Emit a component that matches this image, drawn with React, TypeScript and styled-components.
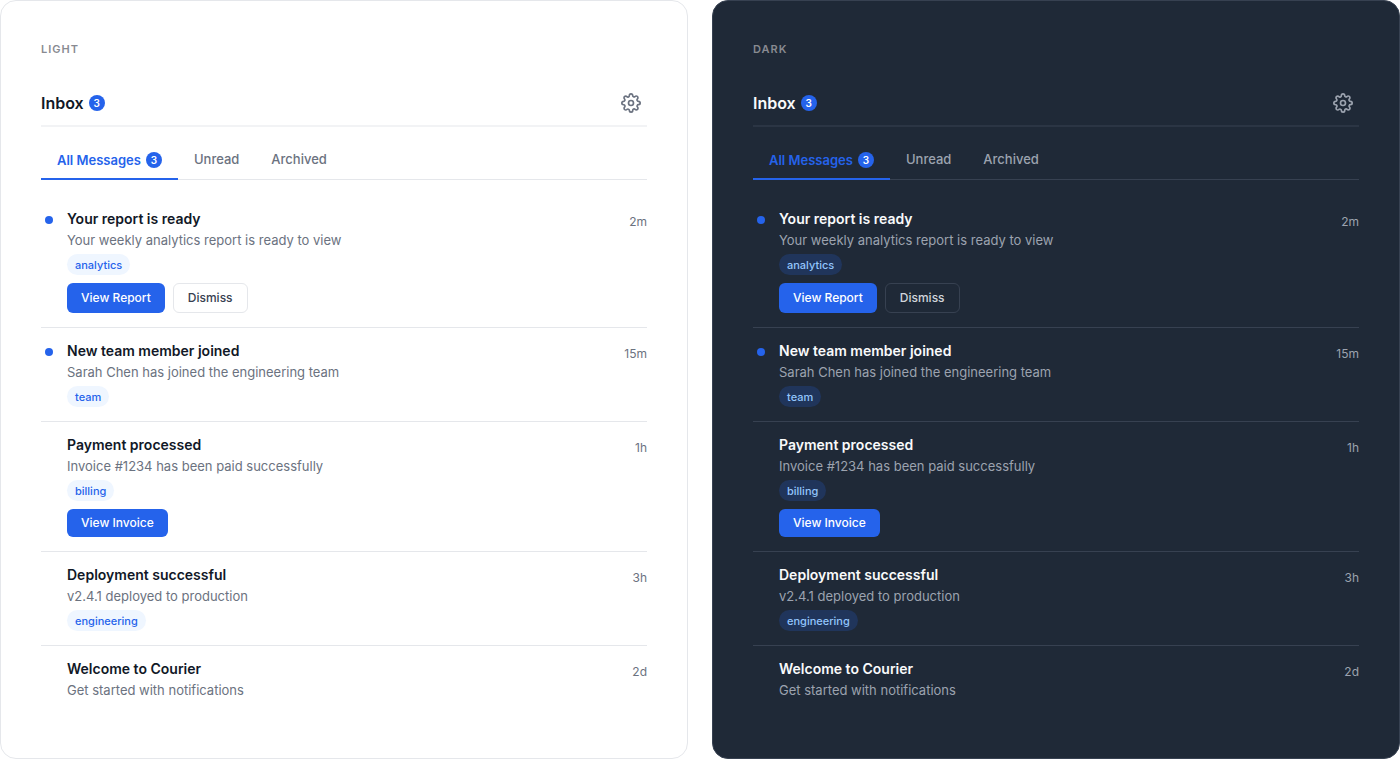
import React from "react";
import styled, { createGlobalStyle, ThemeProvider } from "styled-components";
import { FiSettings } from "react-icons/fi";

const light = {
  surface: "#ffffff",
  frame: "#e5e7eb",
  headerLine: "#f2f3f5",
  line: "#e5e7eb",
  caption: "#888a91",
  title: "#111827",
  muted: "#6b7280",
  secondary: "#374151",
  tagBg: "#eff6ff",
  tagText: "#2563eb",
};

const dark: typeof light = {
  surface: "#1f2937",
  frame: "#374151",
  headerLine: "#2b3544",
  line: "#374151",
  caption: "#888a91",
  title: "#f9fafb",
  muted: "#9ca3af",
  secondary: "#d1d5db",
  tagBg: "#20355b",
  tagText: "#93c5fd",
};

const accent = "#2563eb";

const GlobalStyle = createGlobalStyle`
  *, *::before, *::after { box-sizing: border-box; }
  body {
    margin: 0;
    background: #ffffff;
    font-family: Inter, "Liberation Sans", sans-serif;
    -webkit-font-smoothing: antialiased;
  }
  button { font-family: inherit; cursor: pointer; }
`;

const Page = styled.main`
  display: grid;
  grid-template-columns: repeat(auto-fit, minmax(320px, 1fr));
  gap: 24px;
  min-height: 100vh;
`;

const Panel = styled.section`
  padding: 40px;
  border: 1px solid ${({ theme }: any) => theme.frame};
  border-radius: 16px;
  background: ${({ theme }: any) => theme.surface};
`;

const Caption = styled.p`
  margin: 0 0 29px;
  font-size: 11px;
  line-height: 17px;
  font-weight: 600;
  letter-spacing: 1px;
  text-transform: uppercase;
  color: ${({ theme }: any) => theme.caption};
`;

const Header = styled.header`
  display: flex;
  align-items: center;
  justify-content: space-between;
  padding-bottom: 6px;
  border-bottom: 2px solid ${({ theme }: any) => theme.headerLine};
`;

const Heading = styled.div`
  display: flex;
  align-items: center;
  gap: 5px;
`;

const Title = styled.h2`
  margin: 0;
  font-size: 16px;
  line-height: 24px;
  font-weight: 600;
  color: ${({ theme }: any) => theme.title};
`;

const Badge = styled.span`
  display: inline-flex;
  align-items: center;
  justify-content: center;
  width: 16px;
  height: 16px;
  border-radius: 50%;
  background: ${accent};
  color: #ffffff;
  font-size: 10px;
  line-height: 16px;
  font-weight: 600;
`;

const IconButton = styled.button`
  display: flex;
  padding: 6px;
  border: 0;
  border-radius: 6px;
  background: transparent;
  color: ${({ theme }: any) => theme.muted};
`;

const Tabs = styled.div`
  display: flex;
  margin-top: 12px;
  border-bottom: 1px solid ${({ theme }: any) => theme.line};
`;

const Tab = styled.button<{ $active?: boolean }>`
  display: flex;
  align-items: flex-start;
  gap: 5px;
  margin-bottom: -1px;
  padding: 10px 16px 7px;
  border: 0;
  border-bottom: 2px solid ${({ $active }) => ($active ? accent : "transparent")};
  background: transparent;
  color: ${({ $active, theme }: any) => ($active ? accent : theme.muted)};
  font-size: 13px;
  line-height: ${({ $active }) => ($active ? "22px" : "20px")};
  font-weight: ${({ $active }) => ($active ? 600 : 500)};

  ${Badge} {
    margin-top: 3px;
  }
`;

const List = styled.ul`
  margin: 16px 0 0;
  padding: 0;
  list-style: none;
`;

const Item = styled.li`
  display: grid;
  grid-template-columns: 16px 1fr auto;
  column-gap: 10px;
  padding: 14px 0;
  border-bottom: 1px solid ${({ theme }: any) => theme.line};

  &:last-child {
    border-bottom: 0;
  }
`;

const Dot = styled.span<{ $unread?: boolean }>`
  width: 8px;
  height: 8px;
  margin: 6px 4px 0;
  border-radius: 50%;
  background: ${({ $unread }) => ($unread ? accent : "transparent")};
`;

const Subject = styled.h3`
  margin: 0;
  font-size: 14px;
  line-height: 18px;
  font-weight: 600;
  color: ${({ theme }: any) => theme.title};
`;

const Preview = styled.p`
  margin: 2px 0 0;
  font-size: 13px;
  line-height: 20px;
  color: ${({ theme }: any) => theme.muted};
`;

const Tag = styled.span`
  display: block;
  width: fit-content;
  margin-top: 4px;
  padding: 2px 8px 0;
  border-radius: 11px;
  background: ${({ theme }: any) => theme.tagBg};
  color: ${({ theme }: any) => theme.tagText};
  font-size: 11px;
  line-height: 19px;
  font-weight: 500;
`;

const Actions = styled.div`
  display: flex;
  gap: 8px;
  margin-top: 8px;
`;

const Action = styled.button<{ $outlined?: boolean }>`
  padding: 5px 14px;
  border: ${({ $outlined, theme }: any) => ($outlined ? `1px solid ${theme.line}` : "0")};
  border-radius: 6px;
  background: ${({ $outlined }) => ($outlined ? "transparent" : accent)};
  color: ${({ $outlined, theme }: any) => ($outlined ? theme.secondary : "#ffffff")};
  font-size: 12px;
  line-height: 18px;
  font-weight: 500;
`;

const Time = styled.time`
  padding-top: 2px;
  font-size: 12px;
  line-height: 20px;
  color: ${({ theme }: any) => theme.muted};
`;

type Message = {
  subject: string;
  preview: string;
  time: string;
  unread?: boolean;
  tag?: string;
  primary?: string;
  secondary?: string;
};

const messages: Message[] = [
  {
    subject: "Your report is ready",
    preview: "Your weekly analytics report is ready to view",
    time: "2m",
    unread: true,
    tag: "analytics",
    primary: "View Report",
    secondary: "Dismiss",
  },
  {
    subject: "New team member joined",
    preview: "Sarah Chen has joined the engineering team",
    time: "15m",
    unread: true,
    tag: "team",
  },
  {
    subject: "Payment processed",
    preview: "Invoice #1234 has been paid successfully",
    time: "1h",
    tag: "billing",
    primary: "View Invoice",
  },
  {
    subject: "Deployment successful",
    preview: "v2.4.1 deployed to production",
    time: "3h",
    tag: "engineering",
  },
  {
    subject: "Welcome to Courier",
    preview: "Get started with notifications",
    time: "2d",
  },
];

function MessageRow({ message }: { message: Message }) {
  return (
    <Item>
      <Dot $unread={message.unread} />
      <div>
        <Subject>{message.subject}</Subject>
        <Preview>{message.preview}</Preview>
        {message.tag && <Tag>{message.tag}</Tag>}
        {message.primary && (
          <Actions>
            <Action type="button">{message.primary}</Action>
            {message.secondary && (
              <Action type="button" $outlined>
                {message.secondary}
              </Action>
            )}
          </Actions>
        )}
      </div>
      <Time>{message.time}</Time>
    </Item>
  );
}

function Inbox({ name, theme }: { name: string; theme: typeof light }) {
  return (
    <ThemeProvider theme={theme}>
      <Panel>
        <Caption>{name}</Caption>
        <Header>
          <Heading>
            <Title>Inbox</Title>
            <Badge>3</Badge>
          </Heading>
          <IconButton type="button" aria-label="Settings">
            <FiSettings size={20} />
          </IconButton>
        </Header>
        <Tabs role="tablist">
          <Tab type="button" role="tab" aria-selected="true" $active>
            All Messages <Badge>3</Badge>
          </Tab>
          <Tab type="button" role="tab" aria-selected="false">
            Unread
          </Tab>
          <Tab type="button" role="tab" aria-selected="false">
            Archived
          </Tab>
        </Tabs>
        <List>
          {messages.map((message) => (
            <MessageRow key={message.subject} message={message} />
          ))}
        </List>
      </Panel>
    </ThemeProvider>
  );
}

export default function App() {
  return (
    <>
      <GlobalStyle />
      <Page>
        <Inbox name="Light" theme={light} />
        <Inbox name="Dark" theme={dark} />
      </Page>
    </>
  );
}
